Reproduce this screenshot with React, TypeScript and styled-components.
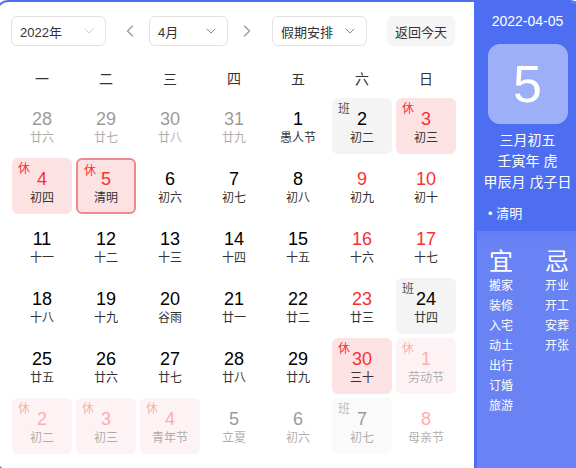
import React from "react";
import styled, { createGlobalStyle } from "styled-components";
import { ChevronDown, ChevronLeft, ChevronRight } from "lucide-react";

const GlobalStyle = createGlobalStyle`
  html, body {
    margin: 0;
    padding: 0;
    background: #ffffff;
    overflow: hidden;
  }
  body {
    font-family: "Liberation Sans", "Noto Sans CJK SC", sans-serif;
    color: #333333;
  }
`;

const Frame = styled.div`
  box-sizing: border-box;
  width: 586px;
  height: 472px;
  margin-left: -4px;
  border: 2px solid #4e6ef2;
  border-radius: 12px;
  overflow: hidden;
  display: flex;
  background: #ffffff;
`;

const Main = styled.div`
  width: 476px;
  flex-shrink: 0;
  padding: 14px 0 0 13px;
  box-sizing: border-box;
`;

const Toolbar = styled.div`
  display: flex;
  align-items: center;
  height: 30px;
`;

const Select = styled.div<{ $width: number; $faded?: boolean }>`
  box-sizing: border-box;
  width: ${({ $width }) => $width}px;
  height: 30px;
  border: 1px solid #e2e2e2;
  border-radius: 6px;
  display: flex;
  align-items: center;
  justify-content: space-between;
  padding: 0 8px 0 8px;
  font-size: 13px;
  color: #333333;

  svg {
    color: ${({ $faded }) => ($faded ? "#d0d0d0" : "#8a8a8a")};
  }
`;

const ArrowButton = styled.div<{ $before: number; $after: number }>`
  width: 22px;
  height: 30px;
  margin: 0 ${({ $after }) => $after}px 0 ${({ $before }) => $before}px;
  display: flex;
  align-items: center;
  justify-content: center;
  color: #9a9a9a;
`;

const TodayButton = styled.div`
  margin-left: 20px;
  width: 68px;
  height: 30px;
  border-radius: 6px;
  background: #f5f5f6;
  display: flex;
  align-items: center;
  justify-content: center;
  font-size: 13px;
  color: #333333;
`;

const WeekHeader = styled.div`
  margin-top: 20px;
  display: grid;
  grid-template-columns: repeat(7, 60px);
  column-gap: 4px;
  height: 24px;
  align-items: center;
  padding-left: 1px;
`;

const WeekDay = styled.div`
  text-align: center;
  font-size: 14px;
  color: #333333;
`;

const DaysGrid = styled.div`
  margin-top: 8px;
  padding-left: 1px;
  display: grid;
  grid-template-columns: repeat(7, 60px);
  grid-auto-rows: 56px;
  gap: 4px;
`;

type Kind = "normal" | "rest" | "work";

const Cell = styled.div<{ $kind: Kind; $other: boolean; $today: boolean }>`
  position: relative;
  box-sizing: border-box;
  border-radius: 6px;
  display: flex;
  flex-direction: column;
  align-items: center;
  padding-top: 10px;
  background: ${({ $kind }) =>
    $kind === "rest" ? "#fde2e4" : $kind === "work" ? "#f4f4f5" : "transparent"};
  border: ${({ $today }) => ($today ? "2px solid #ee8a8e" : "none")};
  padding-top: ${({ $today }) => ($today ? 8 : 10)}px;
  opacity: ${({ $other }) => ($other ? 0.4 : 1)};
`;

const Num = styled.div<{ $red: boolean }>`
  font-size: 18px;
  line-height: 22px;
  color: ${({ $red }) => ($red ? "#f73131" : "#000000")};
`;

const Lunar = styled.div`
  font-size: 12px;
  line-height: 16px;
  color: #333333;
`;

const Badge = styled.span<{ $kind: Kind }>`
  position: absolute;
  top: 4px;
  left: 6px;
  font-size: 12px;
  line-height: 14px;
  color: ${({ $kind }) => ($kind === "rest" ? "#f73131" : "#555555")};
`;

const Side = styled.div`
  flex: 1;
  display: flex;
  flex-direction: column;
  background: #4e6ef2;
  color: #ffffff;
`;

const SideTop = styled.div`
  height: 229px;
  display: flex;
  flex-direction: column;
  align-items: center;
  padding-top: 9px;
  box-sizing: border-box;
`;

const DateLine = styled.div`
  font-size: 14px;
  line-height: 20px;
`;

const BigDay = styled.div`
  margin-top: 13px;
  width: 80px;
  height: 80px;
  border-radius: 12px;
  background: rgba(255, 255, 255, 0.45);
  display: flex;
  align-items: center;
  justify-content: center;
  font-size: 52px;
  line-height: 1;
`;

const LunarInfo = styled.div`
  margin-top: 6px;
  font-size: 14px;
  line-height: 21px;
  text-align: center;
`;

const Term = styled.div`
  align-self: flex-start;
  margin: 11px 0 0 14px;
  font-size: 13px;
  line-height: 20px;
`;

const SideBottom = styled.div`
  flex: 1;
  margin-left: 3px;
  background: linear-gradient(#627cf4, #6983f5 12px);
  display: flex;
  padding: 17px 0 0 12px;
  gap: 20px;
`;

const AdviceColumn = styled.div`
  display: flex;
  flex-direction: column;
  width: 36px;
`;

const AdviceTitle = styled.div`
  font-size: 24px;
  line-height: 28px;
  margin-bottom: 0;
`;

const AdviceItem = styled.div`
  font-size: 12px;
  line-height: 20px;
`;

type Day = {
  n: number;
  l: string;
  kind?: Kind;
  other?: boolean;
  red?: boolean;
  today?: boolean;
};

const days: Day[] = [
  { n: 28, l: "廿六", other: true },
  { n: 29, l: "廿七", other: true },
  { n: 30, l: "廿八", other: true },
  { n: 31, l: "廿九", other: true },
  { n: 1, l: "愚人节" },
  { n: 2, l: "初二", kind: "work" },
  { n: 3, l: "初三", kind: "rest", red: true },
  { n: 4, l: "初四", kind: "rest", red: true },
  { n: 5, l: "清明", kind: "rest", red: true, today: true },
  { n: 6, l: "初六" },
  { n: 7, l: "初七" },
  { n: 8, l: "初八" },
  { n: 9, l: "初九", red: true },
  { n: 10, l: "初十", red: true },
  { n: 11, l: "十一" },
  { n: 12, l: "十二" },
  { n: 13, l: "十三" },
  { n: 14, l: "十四" },
  { n: 15, l: "十五" },
  { n: 16, l: "十六", red: true },
  { n: 17, l: "十七", red: true },
  { n: 18, l: "十八" },
  { n: 19, l: "十九" },
  { n: 20, l: "谷雨" },
  { n: 21, l: "廿一" },
  { n: 22, l: "廿二" },
  { n: 23, l: "廿三", red: true },
  { n: 24, l: "廿四", kind: "work" },
  { n: 25, l: "廿五" },
  { n: 26, l: "廿六" },
  { n: 27, l: "廿七" },
  { n: 28, l: "廿八" },
  { n: 29, l: "廿九" },
  { n: 30, l: "三十", kind: "rest", red: true },
  { n: 1, l: "劳动节", kind: "rest", red: true, other: true },
  { n: 2, l: "初二", kind: "rest", red: true, other: true },
  { n: 3, l: "初三", kind: "rest", red: true, other: true },
  { n: 4, l: "青年节", kind: "rest", red: true, other: true },
  { n: 5, l: "立夏", other: true },
  { n: 6, l: "初六", other: true },
  { n: 7, l: "初七", kind: "work", other: true },
  { n: 8, l: "母亲节", red: true, other: true },
];

const weekDays = ["一", "二", "三", "四", "五", "六", "日"];
const good = ["搬家", "装修", "入宅", "动土", "出行", "订婚", "旅游"];
const bad = ["开业", "开工", "安葬", "开张"];

const App: React.FC = () => {
  return (
    <>
      <GlobalStyle />
      <Frame>
        <Main>
          <Toolbar>
            <Select $width={95} $faded>
              <span>2022年</span>
              <ChevronDown size={16} strokeWidth={1.5} />
            </Select>
            <ArrowButton $before={13} $after={8}>
              <ChevronLeft size={20} strokeWidth={1.5} />
            </ArrowButton>
            <Select $width={79}>
              <span>4月</span>
              <ChevronDown size={16} strokeWidth={1.5} />
            </Select>
            <ArrowButton $before={8} $after={14}>
              <ChevronRight size={20} strokeWidth={1.5} />
            </ArrowButton>
            <Select $width={95}>
              <span>假期安排</span>
              <ChevronDown size={16} strokeWidth={1.5} />
            </Select>
            <TodayButton>返回今天</TodayButton>
          </Toolbar>
          <WeekHeader>
            {weekDays.map((w) => (
              <WeekDay key={w}>{w}</WeekDay>
            ))}
          </WeekHeader>
          <DaysGrid>
            {days.map((d, i) => {
              const kind = d.kind ?? "normal";
              return (
                <Cell
                  key={i}
                  $kind={kind}
                  $other={!!d.other}
                  $today={!!d.today}
                >
                  {kind !== "normal" && (
                    <Badge $kind={kind}>{kind === "rest" ? "休" : "班"}</Badge>
                  )}
                  <Num $red={!!d.red}>{d.n}</Num>
                  <Lunar>{d.l}</Lunar>
                </Cell>
              );
            })}
          </DaysGrid>
        </Main>
        <Side>
          <SideTop>
            <DateLine>2022-04-05</DateLine>
            <BigDay>5</BigDay>
            <LunarInfo>
              <div>三月初五</div>
              <div>壬寅年 虎</div>
              <div>甲辰月 戊子日</div>
            </LunarInfo>
            <Term>• 清明</Term>
          </SideTop>
          <SideBottom>
            <AdviceColumn>
              <AdviceTitle>宜</AdviceTitle>
              {good.map((g) => (
                <AdviceItem key={g}>{g}</AdviceItem>
              ))}
            </AdviceColumn>
            <AdviceColumn>
              <AdviceTitle>忌</AdviceTitle>
              {bad.map((b) => (
                <AdviceItem key={b}>{b}</AdviceItem>
              ))}
            </AdviceColumn>
          </SideBottom>
        </Side>
      </Frame>
    </>
  );
};

export default App;
